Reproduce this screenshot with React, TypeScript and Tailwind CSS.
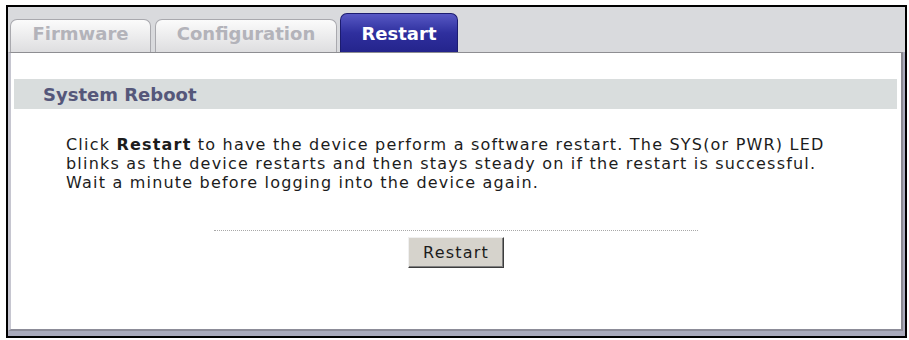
import React from "react";

const font = { fontFamily: '"DejaVu Sans", Verdana, sans-serif' };

function Tab({ label, active, w }: { label: string; active?: boolean; w: string }) {
  if (active) {
    return (
      <div
        className={`${w} h-[39px] flex items-end justify-center pb-[9px] rounded-t-[7px] border border-b-0 border-[#1c1c70] bg-gradient-to-b from-[#5858c4] via-[#2f2f9e] to-[#24248c] text-white font-bold text-[18px] leading-[18px]`}
      >
        {label}
      </div>
    );
  }
  return (
    <div
      className={`${w} h-[33px] flex items-end justify-center pb-[9px] rounded-t-[7px] border border-b-0 border-[#a9a9ae] bg-gradient-to-b from-[#fbfbfb] to-[#dedee0] text-[#b3b3ba] font-bold text-[18px] leading-[18px]`}
    >
      {label}
    </div>
  );
}

export default function App() {
  return (
    <div className="w-[909px] h-[340px] bg-white pt-[5px] pl-[6px]" style={font}>
      <div className="w-[901px] h-[333px] border-2 border-black bg-[#d9dadd] flex flex-col">
        <div className="h-[45px] flex items-end pl-[2px] shrink-0">
          <Tab label="Firmware" w="w-[141px]" />
          <div className="w-[4px]" />
          <Tab label="Configuration" w="w-[182px]" />
          <div className="w-[3px]" />
          <Tab label="Restart" w="w-[118px]" active />
        </div>
        <div className="flex-1 flex flex-col bg-[#a9aabb]">
          <div className="flex-1 mr-[2px] mb-[5px] bg-white border-t border-t-[#8e8e92] border-l-[3px] border-l-[#c6c6d0] border-r-2 border-r-[#8a8a92] border-b-2 border-b-[#8c8c98] flex flex-col">
            <div className="mt-[26px] ml-[3px] mr-[4px] h-[30px] bg-[#d9dddd] flex items-center pl-[29px] text-[18px] font-bold text-[#55577a]">
              System Reboot
            </div>
            <p className="mt-[26px] pl-[55px] text-[16px] tracking-[1.2px] leading-[19px] text-[#1c1c1c] whitespace-nowrap">
              Click <b>Restart</b> to have the device perform a software restart. The SYS(or PWR) LED
              <br />
              blinks as the device restarts and then stays steady on if the restart is successful.
              <br />
              Wait a minute before logging into the device again.
            </p>
            <div className="mt-[38px] mx-auto w-[484px] border-t border-dotted border-[#a8a8a8]" />
            <div className="mt-[6px] flex justify-center">
              <button className="w-[96px] h-[31px] bg-[#d6d3cc] border border-t-[#f0f0f0] border-l-[#f0f0f0] border-r-[#3c3c3c] border-b-[#3c3c3c] shadow-[inset_-1px_-1px_0_#808080] text-[16px] tracking-[1.2px] text-[#1c1c1c] leading-none" style={font}>
                Restart
              </button>
            </div>
          </div>
        </div>
      </div>
    </div>
  );
}
